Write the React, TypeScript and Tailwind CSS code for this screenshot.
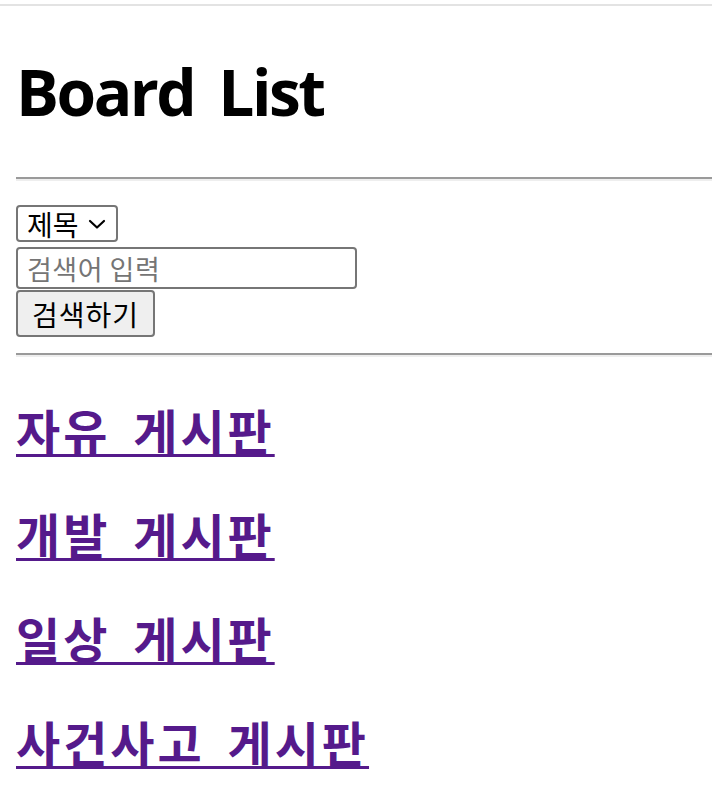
import React from "react";

const boards = ["자유 게시판", "개발 게시판", "일상 게시판", "사건사고 게시판"];

export default function App() {
  return (
    <div className="min-h-[788px] w-full overflow-hidden bg-white text-black" style={{ fontFamily: '"Noto Sans CJK KR", sans-serif' }}>
      <div className="pt-[4px]">
        <div className="h-[2px] w-full bg-[#e3e3e3]" />
      </div>
      <div className="pl-[16px]">
        <h1 className="mt-[43px] mb-[43px] flex h-[85px] items-center text-[64px] font-bold leading-[85px] [font-family:'Open_Sans','Noto_Sans_CJK_KR',sans-serif] tracking-[-2.5px]">
          <span>Board</span>
          <span className="ml-[24px]">List</span>
        </h1>
        <div className="h-[4px] w-[720px] border-t-2 border-b-2 border-t-[#9a9a9a] border-b-[#eeeeee]" />
        <div className="mt-[24px] flex flex-col items-start">
          <div className="flex h-[37px] w-[102px] items-center rounded-[4px] border-2 border-[#767676] bg-white pl-[9px] pr-[10px]">
            <span className="text-[28px] leading-none">제목</span>
            <svg className="ml-auto" width="18" height="12" viewBox="0 0 18 12" fill="none">
              <path d="M2 3 L9 9.5 L16 3" stroke="#000" strokeWidth="2.2" strokeLinecap="round" strokeLinejoin="round" />
            </svg>
          </div>
          <input
            className="mt-[5px] h-[42px] w-[341px] rounded-[4px] border-2 border-[#767676] px-[9px] text-[27px] leading-none tracking-[0.5px] outline-none placeholder:text-[#757575]"
            placeholder="검색어 입력"
          />
          <button className="mt-[1px] h-[47px] w-[139px] rounded-[4px] border-2 border-[#767676] bg-[#efefef] text-[28px] leading-none tracking-[1px]">
            검색하기
          </button>
        </div>
        <div className="mt-[16px] h-[4px] w-[720px] border-t-2 border-b-2 border-t-[#9a9a9a] border-b-[#eeeeee]" />
        <div className="pt-[40px]">
          {boards.map((b) => (
            <h2 key={b} className="mb-[40px] h-[64px] text-[48px] font-bold leading-[64px] tracking-[3px] [word-spacing:9px]">
              <a href="#" className="text-[#551a8b] underline decoration-[3px] underline-offset-[4px]">
                {b}
              </a>
            </h2>
          ))}
        </div>
      </div>
    </div>
  );
}
